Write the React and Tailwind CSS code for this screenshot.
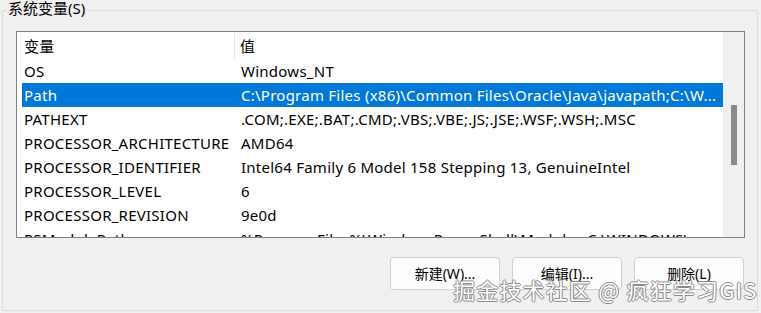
import React from "react";

const rows = [
  ["OS", "Windows_NT"],
  ["Path", "C:\\Program Files (x86)\\Common Files\\Oracle\\Java\\javapath;C:\\W..."],
  ["PATHEXT", ".COM;.EXE;.BAT;.CMD;.VBS;.VBE;.JS;.JSE;.WSF;.WSH;.MSC"],
  ["PROCESSOR_ARCHITECTURE", "AMD64"],
  ["PROCESSOR_IDENTIFIER", "Intel64 Family 6 Model 158 Stepping 13, GenuineIntel"],
  ["PROCESSOR_LEVEL", "6"],
  ["PROCESSOR_REVISION", "9e0d"],
  ["PSModulePath", "%ProgramFiles%\\WindowsPowerShell\\Modules;C:\\WINDOWS\\..."],
];

const font = { fontFamily: '"Noto Sans", "Noto Sans CJK SC", sans-serif' };

export default function App() {
  return (
    <div
      className="relative w-[761px] h-[313px] overflow-hidden bg-[#f0f0f0] text-[15px] text-black"
      style={font}
    >
      {/* group box frame */}
      <div className="absolute left-[2px] top-[10px] w-[756px] h-[301px] border border-[#dcdcdc]" />
      <div className="relative flex flex-col h-full">
        <div className="pl-[6px] h-[20px] leading-[18px] -mt-[1px] shrink-0">
          <span className="bg-[#f0f0f0] px-[2px]">系统变量(S)</span>
        </div>
        <div className="ml-[16px] mt-[12px] w-[729px] h-[207px] shrink-0 border border-[#828282] bg-white flex overflow-hidden">
          <div className="flex-1 flex flex-col pl-[5px] pt-[1px] overflow-hidden tracking-[0.25px]">
            <div className="flex h-[26px] shrink-0 items-center">
              <div className="w-[213px] pl-[2px] border-r border-[#e5e5e5] h-[26px] leading-[26px]">变量</div>
              <div className="pl-[5px]">值</div>
            </div>
            {rows.map(([k, v]) => {
              const sel = k === "Path";
              return (
                <div
                  key={k}
                  className={`flex h-[24px] shrink-0 items-center whitespace-nowrap ${sel ? "bg-[#0078d7] text-white" : ""}`}
                >
                  <div className="w-[219px] pl-[2px]">{k}</div>
                  <div>{v}</div>
                </div>
              );
            })}
          </div>
          <div className="w-[21px] shrink-0 bg-[#f0f0f0] flex justify-center">
            <div className="w-[6px] h-[60px] mt-[73px] bg-[#8a8a8a]" />
          </div>
        </div>
        <div className="flex justify-end gap-[12px] mt-[19px] mr-[17px]">
          {["新建(W)...", "编辑(I)...", "删除(L)"].map((t) => (
            <div
              key={t}
              className="w-[110px] h-[33px] rounded-[4px] border border-[#d0d0d0] bg-[#fdfdfd] flex items-center justify-center text-[14px]"
            >
              {t}
            </div>
          ))}
        </div>
      </div>
      {/* watermark */}
      <div
        className="absolute left-[453px] top-[274px] text-[22px] leading-[30px] tracking-[1.2px] text-white whitespace-nowrap"
        style={{
          fontFamily: '"Noto Sans CJK SC", "Noto Sans", sans-serif',
          textShadow:
            "1px 0 #8a8a8a, -1px 0 #8a8a8a, 0 1px #8a8a8a, 0 -1px #8a8a8a",
        }}
      >
        掘金技术社区 @ 疯狂学习GIS
      </div>
    </div>
  );
}
